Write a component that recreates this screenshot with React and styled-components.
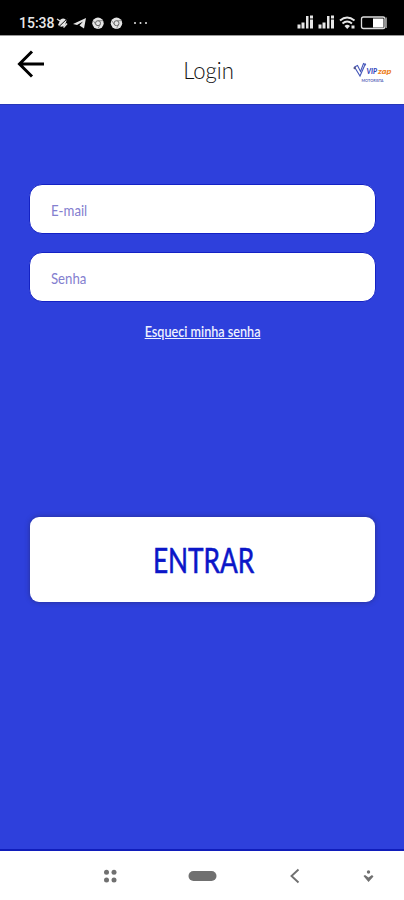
import React from 'react';
import styled, { createGlobalStyle } from "styled-components";

const App = () => {
    return (<>
        <GlobalStyle />
        <Screen>
            <StatusBar>
                <Clock>15:38</Clock>
                <StatusIcons />
                <SignalIcons />
            </StatusBar>
            <Header>
                <BackButton aria-label="Voltar">
                    <svg width="28" height="28" viewBox="0 0 28 28" fill="none" stroke="#000" strokeWidth="3">
                        <path d="M27 14H3M15 1.5L2.5 14L15 26.5" />
                    </svg>
                </BackButton>
                <Title><Narrow $scale={0.92}>Login</Narrow></Title>
                <Logo />
            </Header>
            <Main>
                <Field><Narrow $scale={0.88}>E-mail</Narrow></Field>
                <Field><Narrow $scale={0.88}>Senha</Narrow></Field>
                <Forgot href="#"><Narrow $scale={0.87}>Esqueci minha senha</Narrow></Forgot>
                <Submit><Narrow $scale={0.75}>ENTRAR</Narrow></Submit>
            </Main>
            <NavBar />
        </Screen>
    </>);
}

export default App;

const StatusIcons = () => (
    <svg width="96" height="16" viewBox="55 15 96 16" fill="#e4e4e4">
        <path d="M58 25L60.500 19.500Q64 17 66.500 20.500L65 25.500Q61 28 58 25Z" />
        <path d="M57.500 28L68 18" stroke="#111" strokeWidth="1" />
        <path d="M57 19L60 21M63.500 27.500L67 23.500" stroke="#ddd" strokeWidth="1.500" />
        <path d="M73 24L86 18L84 28.500L79.500 25.500L83 21.500L77 25Z" />
        {[98, 116.5].map((x) => (
            <g key={x}>
                <circle cx={x} cy="23.200" r="5.700" />
                <circle cx={x} cy="23.200" r="2.500" fill="none" stroke="#666" strokeWidth="1" />
                <path d={`M${x} 20.700H${x + 5}M${x - 4.500} 21L${x - 2.200} 24.500M${x + 2.200} 24.500L${x} 28.500`} stroke="#777" strokeWidth=".8" />
            </g>
        ))}
        {[135, 140.5, 146].map((x) => <circle key={x} cx={x} cy="23" r="1" />)}
    </svg>
)

const SignalIcons = () => (
    <SignalSvg width="92" height="16" viewBox="297 15 92 16" fill="#e6e6e6">
        {[297.5, 318.5].map((x) => (
            <g key={x}>
                <rect x={x} y="24.500" width="3" height="4" />
                <rect x={x + 4} y="22.500" width="3" height="6" />
                <rect x={x + 8.500} y="16" width="2.500" height="12.500" />
                <rect x={x + 12.500} y="15.500" width="3" height="3" />
                <rect x={x + 12.500} y="19.500" width="3" height="9" />
            </g>
        ))}
        <g fill="none" stroke="#e6e6e6" strokeWidth="1.900">
            <path d="M340 20.500Q347 14.500 354.500 20.500" />
            <path d="M342.500 23.500Q347 19.500 352 23.500" />
        </g>
        <path d="M344.500 26Q347 23.500 350 26L347.200 29Z" />
        <rect x="351.500" y="25.500" width="3" height="3" />
        <rect x="361.500" y="17" width="23.500" height="11.500" rx="2" fill="none" stroke="#ddd" strokeWidth="1.300" />
        <rect x="373" y="18.500" width="10.500" height="9" fill="#fff" />
        <path d="M386.300 17.500V28" stroke="#aaa" strokeWidth="1" />
    </SignalSvg>
)

const Logo = () => (
    <svg width="40" height="26" viewBox="353 60 40 26">
        <path d="M354.500 67L360 76L365.500 63.500M354.500 67L357.500 65.500L360.500 71.500L363.500 63.500L366 65" fill="none" stroke="#4456b9" strokeWidth="1.100" />
        <circle cx="354.700" cy="68" r="1.200" fill="#555588" />
        <LogoText x="366.500" y="73.500" textLength="10.500" lengthAdjust="spacingAndGlyphs" fill="#3447bd">VIP</LogoText>
        <LogoText x="378" y="73.500" textLength="13.500" lengthAdjust="spacingAndGlyphs" fill="#ed8126">zap</LogoText>
        <LogoSmall x="361.500" y="82.300" textLength="22" lengthAdjust="spacingAndGlyphs" fill="#5966b8">MOTORISTA</LogoSmall>
    </svg>
)

const NavBar = () => (
    <Nav>
        <svg width="404" height="49" viewBox="0 851 404 49" fill="#707070">
            {[106.5, 114].map((x) => [872.3, 880].map((y) => (
                <circle key={x + "-" + y} cx={x} cy={y} r="2.500" />
            )))}
            <rect x="188.500" y="871" width="28" height="10" rx="5" />
            <path d="M298.500 869.500L291.500 876L298.500 882.500" fill="none" stroke="#707070" strokeWidth="1.900" />
            <circle cx="368.500" cy="872" r="1.700" />
            <path d="M363.500 876L365 875L368.500 877.500L372 875L373.500 876.500L368.500 882Z" />
        </svg>
    </Nav>
)

const GlobalStyle = createGlobalStyle`
    body {
        margin: 0;
        background-color: #2e40dc;
    }
    * {
        box-sizing: border-box;
    }
`

const Screen = styled.div`
    display: flex;
    flex-direction: column;
    width: 404px;
    height: 900px;
    overflow: hidden;
    font-family: Lato, "Liberation Sans", sans-serif;
    background-color: #2e40dc;
`

const Narrow = styled.span`
    display: inline-block;
    transform: scaleX(${(props) => props.$scale});
    transform-origin: inherit;
    white-space: nowrap;
`

const StatusBar = styled.div`
    display: flex;
    align-items: center;
    flex: none;
    height: 35px;
    padding: 11px 15px 0 19px;
    background-color: #000000;
`

const Clock = styled.span`
    width: 36px;
    font-family: Roboto, sans-serif;
    font-size: 14px;
    font-weight: 500;
    line-height: 16px;
    color: #e8e8e8;
`

const SignalSvg = styled.svg`
    margin-left: auto;
`

const Header = styled.div`
    display: grid;
    grid-template-columns: 1fr auto 1fr;
    align-items: center;
    flex: none;
    height: 69px;
    padding: 0 11px 0 17px;
    border-top: 1px solid #999999;
    background-color: #ffffff;
    > svg {
        justify-self: end;
        margin-top: 6px;
    }
`

const BackButton = styled.button`
    width: 28px;
    height: 28px;
    margin-bottom: 12px;
    padding: 0;
    border: 0;
    background: none;
    svg {
        display: block;
    }
`

const Title = styled.h1`
    margin: 0 0 1px 8px;
    font-size: 24px;
    font-weight: 300;
    line-height: 30px;
    color: #111111;
`

const LogoText = styled.text`
    font-size: 7px;
    font-style: italic;
    font-weight: 900;
`

const LogoSmall = styled.text`
    font-size: 3.5px;
    font-weight: 700;
`

const Main = styled.div`
    display: flex;
    flex-direction: column;
    align-items: center;
    flex: 1;
    padding: 79px 28px 0 29px;
    border-top: 1px solid #2737b9;
    border-bottom: 2px solid #101dbb;
`

const Field = styled.div`
    display: flex;
    align-items: center;
    flex: none;
    width: 100%;
    height: 50px;
    margin-bottom: 18px;
    padding: 1px 20px 0 21px;
    border: 1px solid #1422c4;
    border-radius: 13px;
    transform-origin: left center;
    background-color: #ffffff;
    font-size: 15px;
    color: #8480cf;
`

const Forgot = styled.a`
    margin-top: 2px;
    font-size: 14.5px;
    font-weight: 600;
    line-height: 20px;
    text-decoration: none;
    color: #edf0ff;
    span {
        text-decoration: underline;
    }
`

const Submit = styled.button`
    width: 345px;
    height: 85px;
    margin-top: 175px;
    padding: 0 0 2px 2px;
    border: 0;
    border-radius: 9px;
    background-color: #ffffff;
    box-shadow: 0 0 5px rgba(35, 40, 110, 0.7);
    font-family: inherit;
    font-size: 35px;
    color: #0b16c8;
    -webkit-text-stroke: 0.6px #0b16c8;
`

const Nav = styled.div`
    flex: none;
    height: 49px;
    background-color: #ffffff;
    svg {
        display: block;
    }
`
